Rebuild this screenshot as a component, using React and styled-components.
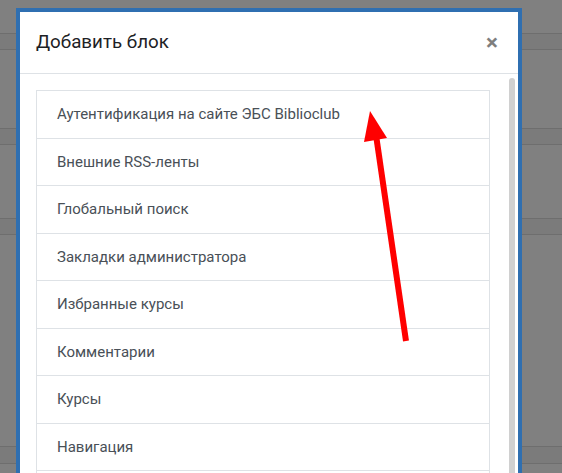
import React from "react";
import styled, { createGlobalStyle } from "styled-components";

const Global = createGlobalStyle`
  html, body { margin: 0; padding: 0; }
  body { font-family: Roboto, "Liberation Sans", Arial, sans-serif; overflow: hidden; }
`;

const Page = styled.div`
  position: relative;
  width: 562px;
  height: 473px;
  overflow: hidden;
  background: #808080;
  display: flex;
  flex-direction: column;
`;

const Band = styled.div`
  margin-top: ${(p) => p.$gap}px;
  height: ${(p) => p.$h}px;
  flex-shrink: 0;
  background: #7b7b7b;
  border-top: 1px solid #6e6e6e;
  border-bottom: 1px solid #6e6e6e;
`;

const Frame = styled.div`
  position: absolute;
  left: 16px;
  top: 8px;
  width: 498px;
  height: 520px;
  border: 4px solid #2f6fb1;
  background: #fff;
  display: flex;
  flex-direction: column;
`;

const Header = styled.div`
  display: flex;
  align-items: center;
  justify-content: space-between;
  padding: 16px 16px 17px;
  border-bottom: 1px solid #dee2e6;
`;

const Title = styled.h5`
  margin: 0;
  font-size: 18.75px;
  line-height: 28px;
  font-weight: 400;
  color: #1d2125;
`;

const Close = styled.button`
  border: 0;
  background: transparent;
  padding: 0 4px 0 0;
  font-family: Roboto, "Liberation Sans", Arial, sans-serif;
  font-size: 22.5px;
  font-weight: 700;
  line-height: 1;
  color: #000;
  opacity: 0.5;
  cursor: pointer;
`;

const Body = styled.div`
  flex: 1;
  display: flex;
  min-height: 0;
`;

const Content = styled.div`
  flex: 1;
  padding: 16px;
`;

const List = styled.div`
  display: flex;
  flex-direction: column;
  border: 1px solid #dee2e6;
  border-bottom: 0;
`;

const Item = styled.a`
  display: block;
  padding: 12px 20px;
  font-size: 15px;
  line-height: 22.5px;
  color: #495057;
  text-decoration: none;
  border-bottom: 1px solid #dee2e6;
  background: #fff;
`;

const Track = styled.div`
  width: 12px;
  flex-shrink: 0;
  padding: 4px 3px 0;
  box-sizing: border-box;
`;

const Thumb = styled.div`
  height: 100%;
  background: #d0d0d0;
  border-radius: 3px 3px 0 0;
`;

const Arrow = styled.svg`
  position: absolute;
  left: 0;
  top: 0;
  pointer-events: none;
`;

const items = [
  "Аутентификация на сайте ЭБС Biblioclub",
  "Внешние RSS-ленты",
  "Глобальный поиск",
  "Закладки администратора",
  "Избранные курсы",
  "Комментарии",
  "Курсы",
  "Навигация",
  "Новостной форум",
];

export default function App() {
  return (
    <>
      <Global />
      <Page>
        <Band $gap={33} $h={15} />
        <Band $gap={78} $h={15} />
        <Band $gap={73} $h={15} />
        <Band $gap={211} $h={16} />
        <Frame>
          <Header>
            <Title>Добавить блок</Title>
            <Close aria-label="Закрыть">×</Close>
          </Header>
          <Body>
            <Content>
              <List>
                {items.map((t) => (
                  <Item key={t} href="#">
                    {t}
                  </Item>
                ))}
              </List>
            </Content>
            <Track>
              <Thumb />
            </Track>
          </Body>
        </Frame>
        <Arrow width="562" height="473" viewBox="0 0 562 473">
          <line x1="406" y1="341" x2="376" y2="135" stroke="#ff0000" strokeWidth="6" />
          <polygon points="370,111 364,142 387,138" fill="#ff0000" />
        </Arrow>
      </Page>
    </>
  );
}
